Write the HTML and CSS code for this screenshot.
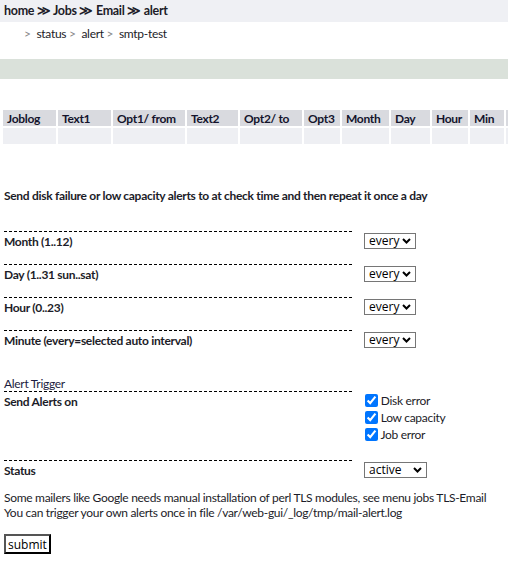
FILE: index.html
```html
<!DOCTYPE html>
<html lang="en">
<head>
    <meta charset="UTF-8">
    <meta name="viewport" content="width=device-width, initial-scale=1.0">
    <title>alert</title>
    <link rel="stylesheet" href="styles.css">
</head>
<body>
    <div id="topnav"><b>home &#8811; Jobs &#8811; Email &#8811; alert</b></div>
    <div id="subnav">
        <span class="sep">&gt;</span> status <span class="sep">&gt;</span> alert <span class="sep">&gt;</span> smtp-test
    </div>
    <div id="statusbar"></div>

    <table id="joblist">
        <tr>
            <th class="c1">Joblog</th>
            <th class="c2">Text1</th>
            <th class="c3">Opt1/ from</th>
            <th class="c4">Text2</th>
            <th class="c5">Opt2/ to</th>
            <th class="c6">Opt3</th>
            <th class="c7">Month</th>
            <th class="c8">Day</th>
            <th class="c9">Hour</th>
            <th class="c10">Min</th>
            <th class="c11">ID</th>
        </tr>
        <tr>
            <td></td><td></td><td></td><td></td><td></td><td></td>
            <td></td><td></td><td></td><td></td><td></td>
        </tr>
    </table>

    <form id="alertForm">
        <p class="intro">Send disk failure or low capacity alerts to at check time and then repeat it once a day</p>

        <table class="opts">
            <tr>
                <td class="lbl">Month (1..12)</td>
                <td class="ctl"><select><option>every</option></select></td>
            </tr>
            <tr>
                <td class="lbl">Day (1..31 sun..sat)</td>
                <td class="ctl"><select><option>every</option></select></td>
            </tr>
            <tr>
                <td class="lbl">Hour (0..23)</td>
                <td class="ctl"><select><option>every</option></select></td>
            </tr>
            <tr>
                <td class="lbl">Minute (every=selected auto interval)</td>
                <td class="ctl"><select><option>every</option></select></td>
            </tr>
        </table>

        <p class="trigger">Alert Trigger</p>

        <table class="opts">
            <tr>
                <td class="lbl tall">Send Alerts on</td>
                <td class="ctl checks">
                    <label><input type="checkbox" checked> Disk error</label>
                    <label><input type="checkbox" checked> Low capacity</label>
                    <label><input type="checkbox" checked> Job error</label>
                </td>
            </tr>
            <tr>
                <td class="lbl last">Status</td>
                <td class="ctl"><select class="wide"><option>active</option></select></td>
            </tr>
        </table>

        <p class="note">Some mailers like Google needs manual installation of perl TLS modules, see menu jobs TLS-Email<br>
        You can trigger your own alerts once in file /var/web-gui/_log/tmp/mail-alert.log</p>

        <input type="submit" id="submit" value="submit">
    </form>
</body>
</html>
```

FILE: styles.css
```css
body{
    margin: 0;
    font-family: Lato, "Open Sans", sans-serif;
    font-size: 12px;
    letter-spacing: -0.3px;
    color: #1c1c28;
}
#topnav{
    background-color: #eff0f4;
    height: 22px;
    line-height: 22px;
    padding-left: 4px;
    font-size: 12.5px;
}
#subnav{
    padding-left: 24px;
    margin-top: 4px;
    font-size: 12px;
}
.sep{
    color: #888;
    margin-right: 3px;
}
#statusbar{
    background-color: #dae1da;
    height: 20px;
    margin-top: 18px;
}
#joblist{
    margin-top: 29px;
    margin-left: 1px;
    border-spacing: 2px;
    table-layout: fixed;
    width: 551px;
}
#joblist th{
    background-color: #d9dadf;
    text-align: left;
    height: 16px;
    padding: 0 0 0 4px;
    font-size: 12px;
    color: #14142c;
    white-space: nowrap;
    overflow: hidden;
}
#joblist td{
    background-color: #eeeff3;
    height: 16px;
    padding: 0;
}
.c1{ width: 49px; }
.c2{ width: 49px; }
.c3{ width: 68px; }
.c4{ width: 47px; }
.c5{ width: 58px; }
.c6{ width: 32px; }
.c7{ width: 43px; }
.c8{ width: 35px; }
.c9{ width: 32px; }
.c10{ width: 30px; }
.c11{ width: 40px; }

#alertForm{
    padding-left: 4px;
}
.intro{
    font-weight: bold;
    margin: 42px 0 28px 0;
}
.opts{
    border-spacing: 0;
}
.lbl{
    width: 348px;
    border-top: 1px dashed #000;
    font-weight: bold;
    vertical-align: top;
    padding: 2px 0 15px 0;
}
.lbl.tall{
    padding-bottom: 51px;
}
.lbl.last{
    padding-bottom: 0;
}
.ctl{
    vertical-align: top;
    padding: 2px 0 0 12px;
}
select{
    appearance: none;
    -webkit-appearance: none;
    font-family: "Open Sans", sans-serif;
    font-size: 12px;
    letter-spacing: 0;
    color: #000;
    border: 1px solid #767676;
    border-radius: 0;
    height: 16px;
    width: 52px;
    padding: 0 0 0 4px;
    line-height: 14px;
    background: #fff url("data:image/svg+xml,%3Csvg xmlns='http://www.w3.org/2000/svg' width='9' height='6'%3E%3Cpath d='M1 1l3.5 3.5L8 1' fill='none' stroke='%23000' stroke-width='2'/%3E%3C/svg%3E") no-repeat right 4px center;
}
select.wide{
    width: 63px;
}
.trigger{
    margin: 13px 0 0 0;
    color: #1c1c40;
}
.checks label{
    display: block;
    height: 17px;
}
.checks input{
    margin: 0 0 0 1px;
    width: 13px;
    height: 13px;
    vertical-align: -2px;
    accent-color: #0075ff;
}
.note{
    margin: 12px 0 14px 0;
    line-height: 15px;
}
#submit{
    font-family: "Open Sans", sans-serif;
    font-size: 12px;
    letter-spacing: 0;
    background-color: #fff;
    color: #000;
    border: 2px outset #555;
    padding: 0 2px;
    height: 20px;
}
```
